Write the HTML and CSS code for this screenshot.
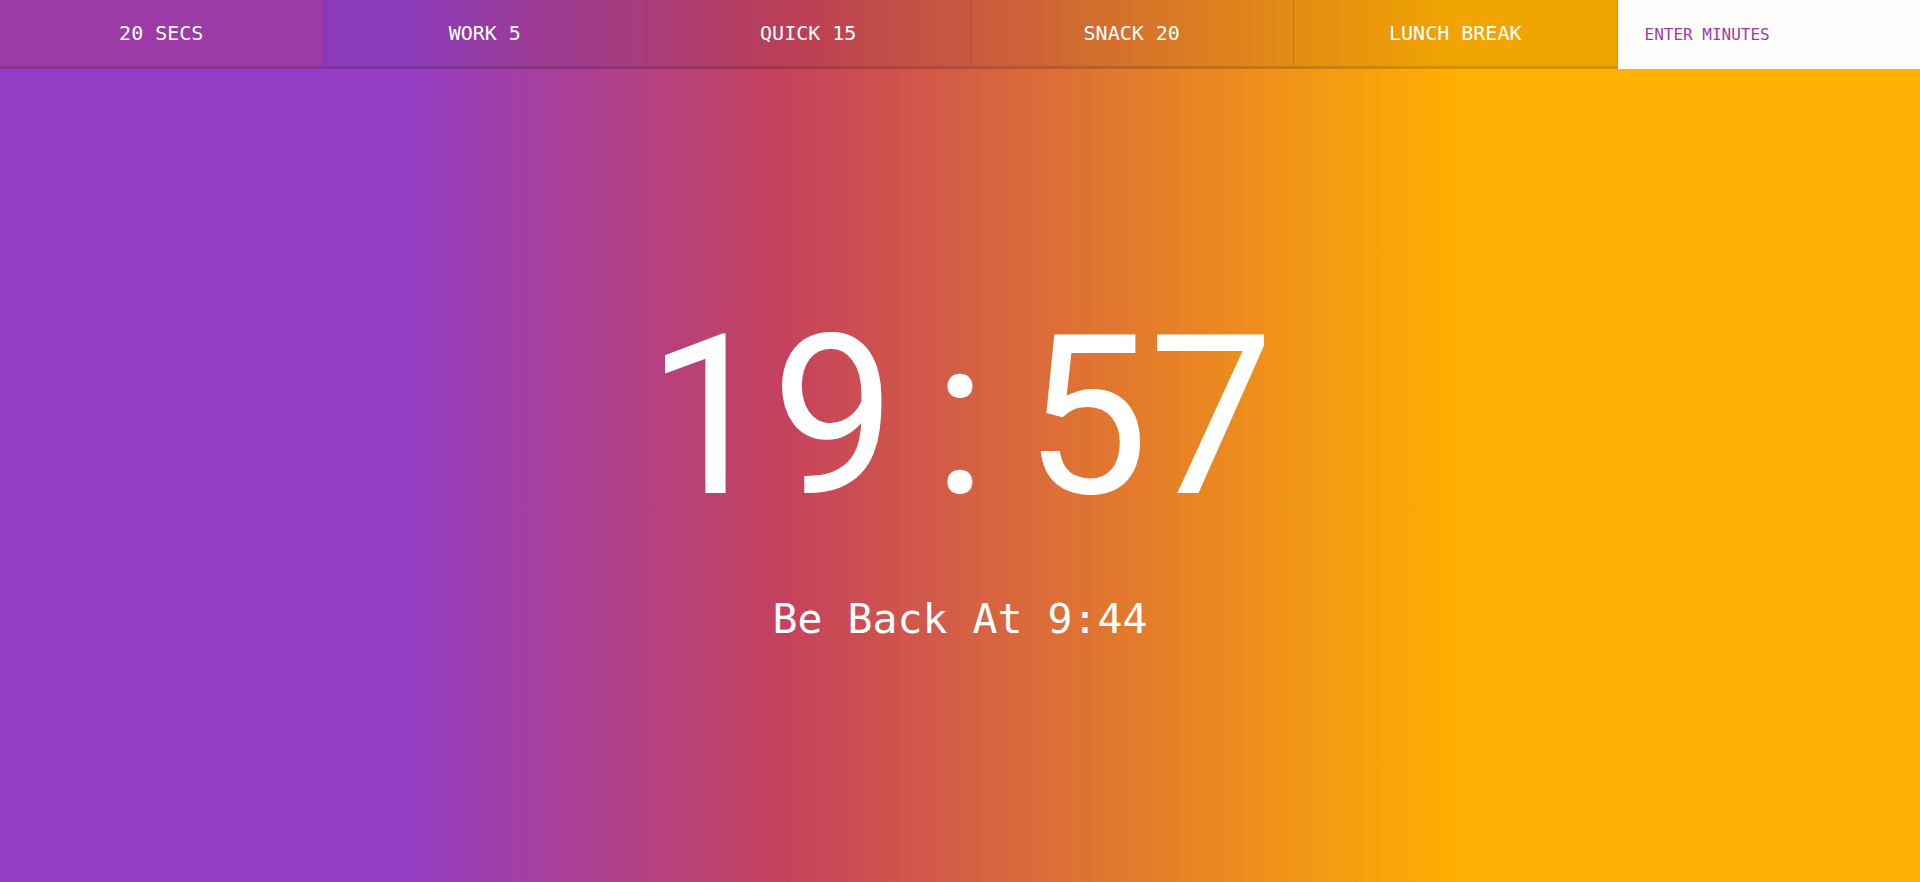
FILE: index.html
```html
<!DOCTYPE html>
<html lang="en">
<head>
<meta charset="utf-8">
<title>Countdown Timer</title>
<link rel="stylesheet" href="styles.css">
</head>
<body>
<div class="timer">
  <div class="timer__controls">
    <button class="timer__button timer__button--active">20 Secs</button>
    <button class="timer__button">Work 5</button>
    <button class="timer__button">Quick 15</button>
    <button class="timer__button">Snack 20</button>
    <button class="timer__button">Lunch Break</button>
    <form class="timer__form">
      <input class="timer__input" type="text" name="minutes" placeholder="ENTER MINUTES">
    </form>
  </div>
  <div class="display">
    <h1 class="display__time-left">19<span class="display__colon">:</span>57</h1>
    <p class="display__end-time">Be Back At 9:44</p>
  </div>
</div>
</body>
</html>
```

FILE: styles.css
```css
html {
  box-sizing: border-box;
  height: 100%;
}

*, *::before, *::after {
  box-sizing: inherit;
}

body {
  margin: 0;
  height: 100%;
  text-align: center;
  font-family: "DejaVu Sans Mono", "Liberation Mono", monospace;
  background: linear-gradient(to right, #943ec5 21%, #c6425c 41%, #ffb000 76%);
  overflow: hidden;
}

.timer {
  display: flex;
  flex-direction: column;
  min-height: 100vh;
}

.timer__controls {
  display: flex;
  height: 69px;
}

.timer__controls > * {
  flex: 1;
}

.timer__button {
  background: rgba(0, 0, 0, 0.06);
  border: 0;
  border-bottom: 3px solid rgba(0, 0, 0, 0.12);
  border-right: 1px solid rgba(0, 0, 0, 0.12);
  padding: 10px;
  color: #fff;
  font-family: "DejaVu Sans Mono", "Liberation Mono", monospace;
  font-size: 20px;
  text-transform: uppercase;
  cursor: pointer;
}

.timer__button--active {
  background: #9c3ba5;
}

.timer__form {
  display: flex;
}

.timer__input {
  flex: 1;
  min-width: 0;
  border: 0;
  padding: 0 27px;
  background: #fffdfb;
  font-family: "DejaVu Sans Mono", "Liberation Mono", monospace;
  font-size: 16px;
  color: #9c3aa6;
}

.timer__input::placeholder {
  color: #9c3aa6;
  opacity: 1;
}

.display {
  flex: 1;
  display: flex;
  flex-direction: column;
  align-items: center;
  justify-content: center;
  padding-bottom: 6px;
}

.display__time-left {
  margin: 0;
  color: #fff;
  font-family: Roboto, "Noto Sans", sans-serif;
  font-weight: 400;
  font-size: 222px;
  line-height: 1;
}

.display__colon {
  margin: 0 37px;
}

.display__end-time {
  margin: 70px 0 0;
  color: #fff;
  font-size: 41.5px;
  line-height: 1;
}
```
